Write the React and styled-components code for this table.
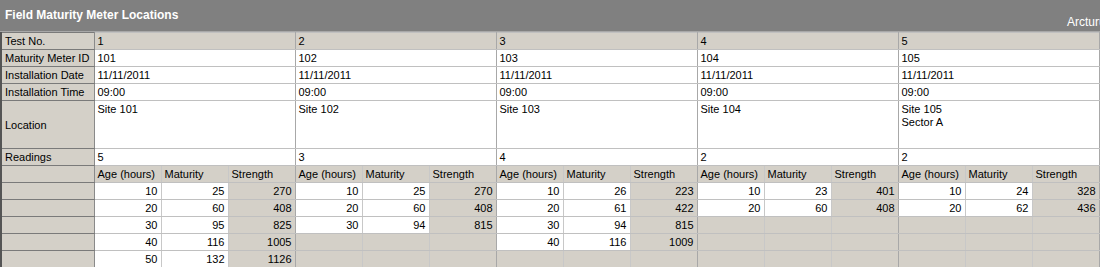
import React from "react";
import styled, { createGlobalStyle } from "styled-components";

const GlobalStyle = createGlobalStyle`
  body {
    margin: 0;
    background: #fff;
    font-family: "Liberation Sans", Arial, sans-serif;
  }
`;

const Page = styled.div`
  width: 1100px;
  height: 267px;
  overflow: hidden;
  background: #fff;
`;

const TitleBar = styled.div`
  height: 31px;
  background-color: #808080;
  border-bottom: 1px solid #a8a8a8;
  display: flex;
  flex-direction: row;
  align-items: flex-start;
  overflow: hidden;
  color: #fff;
`;

const Title = styled.div`
  flex: 0 0 1067px;
  padding: 8px 0 0 5px;
  box-sizing: border-box;
  font-size: 12px;
  font-weight: bold;
`;

const Owner = styled.div`
  flex-shrink: 0;
  white-space: nowrap;
  padding-top: 15px;
  font-size: 12px;
`;

const Grid = styled.table`
  border-collapse: collapse;
  table-layout: fixed;
  width: 1098px;
  font-size: 11px;
  color: #000;
  border-left: 2px solid #555;
`;

const Label = styled.th`
  width: 88px;
  height: 16px;
  padding: 0 0 0 3px;
  text-align: left;
  font-weight: normal;
  background-color: #d4d0c8;
  border-top: 1px solid #7a7a7a;
  border-bottom: 1px solid #7a7a7a;
  border-right: 1px solid #8a8a8a;
  white-space: nowrap;
`;

const Cell = styled.td`
  height: ${(props) => props.$tall ? "45px" : "16px"};
  padding: ${(props) => props.$tall ? "2px 3px 0 3px" : "0 3px"};
  vertical-align: ${(props) => props.$tall ? "top" : "middle"};
  text-align: ${(props) => props.$right ? "right" : "left"};
  background-color: ${(props) => props.$shade ? "#d4d0c8" : "#fff"};
  border: 1px solid #c0c0c0;
  border-right-color: ${(props) => props.$edge ? "#a8a8a8" : "#c8c8c8"};
  white-space: nowrap;
  overflow: hidden;
  line-height: 13px;
`;

const tests = [
  { no: 1, id: 101, loc: ["Site 101"], readings: [[10, 25, 270], [20, 60, 408], [30, 95, 825], [40, 116, 1005], [50, 132, 1126]] },
  { no: 2, id: 102, loc: ["Site 102"], readings: [[10, 25, 270], [20, 60, 408], [30, 94, 815]] },
  { no: 3, id: 103, loc: ["Site 103"], readings: [[10, 26, 223], [20, 61, 422], [30, 94, 815], [40, 116, 1009]] },
  { no: 4, id: 104, loc: ["Site 104"], readings: [[10, 23, 401], [20, 60, 408]] },
  { no: 5, id: 105, loc: ["Site 105", "Sector A"], readings: [[10, 24, 328], [20, 62, 436]] },
];

const ROWS = 5;

const InfoRow = ({ label, shade, tall, get }) => (
  <tr>
    <Label>{label}</Label>
    {tests.map((t) => (
      <Cell key={t.no} colSpan={3} $shade={shade} $tall={tall} $edge>
        {get(t)}
      </Cell>
    ))}
  </tr>
);

export default () => {
  return (
    <Page>
      <GlobalStyle />
      <TitleBar>
        <Title>Field Maturity Meter Locations</Title>
        <Owner>Arcturus Consulting</Owner>
      </TitleBar>
      <Grid>
        <colgroup>
          <col style={{ width: 93 }} />
          {Array.from({ length: 15 }).map((_, i) => (
            <col key={i} style={{ width: 67 }} />
          ))}
        </colgroup>
        <tbody>
          <InfoRow label="Test No." shade get={(t) => t.no} />
          <InfoRow label="Maturity Meter ID" get={(t) => t.id} />
          <InfoRow label="Installation Date" get={() => "11/11/2011"} />
          <InfoRow label="Installation Time" get={() => "09:00"} />
          <InfoRow
            label="Location"
            tall
            get={(t) => t.loc.map((l) => <div key={l}>{l}</div>)}
          />
          <InfoRow label="Readings" get={(t) => t.readings.length} />
          <tr>
            <Label />
            {tests.map((t) => (
              <React.Fragment key={t.no}>
                <Cell $shade>Age (hours)</Cell>
                <Cell $shade>Maturity</Cell>
                <Cell $shade $edge>Strength</Cell>
              </React.Fragment>
            ))}
          </tr>
          {Array.from({ length: ROWS }).map((_, r) => (
            <tr key={r}>
              <Label />
              {tests.map((t) => {
                const row = t.readings[r];
                return (
                  <React.Fragment key={t.no}>
                    <Cell $right $shade={!row}>{row ? row[0] : ""}</Cell>
                    <Cell $right $shade={!row}>{row ? row[1] : ""}</Cell>
                    <Cell $right $shade $edge>{row ? row[2] : ""}</Cell>
                  </React.Fragment>
                );
              })}
            </tr>
          ))}
        </tbody>
      </Grid>
    </Page>
  );
};
